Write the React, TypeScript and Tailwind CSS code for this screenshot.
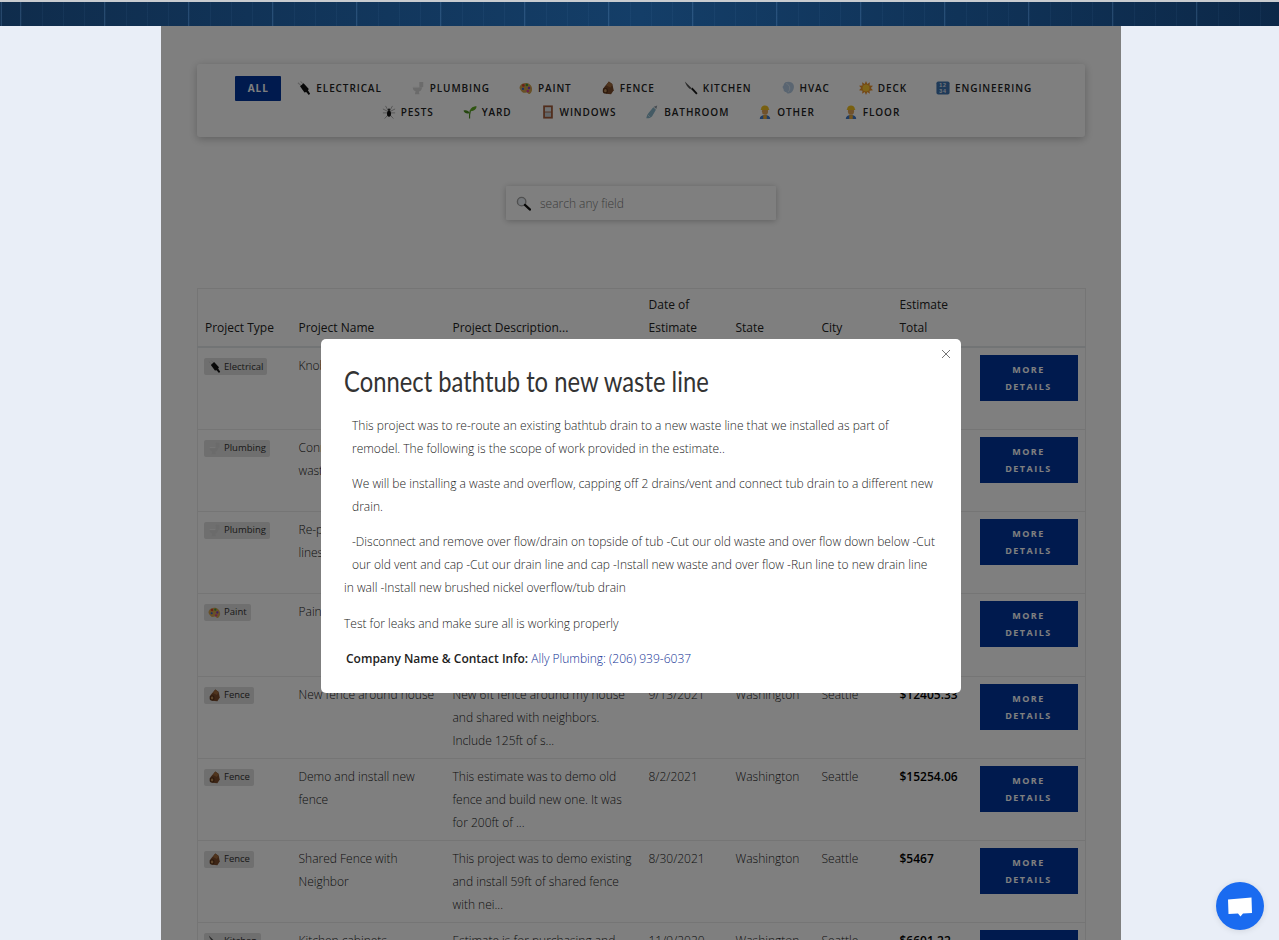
import React from "react";

type IconKind =
  | "plug"
  | "toilet"
  | "palette"
  | "wood"
  | "knife"
  | "hvac"
  | "sun"
  | "numbers"
  | "spider"
  | "seedling"
  | "window"
  | "shower"
  | "worker";

function Emoji({ kind, size = 14 }: { kind: IconKind; size?: number }) {
  return (
    <svg width={size} height={size} viewBox="0 0 16 16" className="shrink-0">
      {kind === "plug" && (
        <g>
          <path d="M1 2l4 3.500M4 0.500l3 3" stroke="#c4c4c4" strokeWidth="1.200" />
          <path d="M3.500 6L7.500 2.500l6 6.500-1 1.500 2.500 4-1.500 1.500-3-3.500-2 .5z" fill="#111" />
        </g>
      )}
      {kind === "toilet" && (
        <g fill="#d6d6d6">
          <rect x="9.500" y="1" width="4.500" height="6" rx="0.600" />
          <path d="M2 7h10.500c0 3-1.500 4.500-3.500 5l.7 3H4.500l.7-3.500C3.200 11 2 9.500 2 7z" />
          <rect x="2" y="6.500" width="7" height="1" fill="#f3f3f3" />
        </g>
      )}
      {kind === "palette" && (
        <g>
          <path d="M1 6c2-4 8-5 11.500-2s3 8.500 0 10.500c-2 1-2.500-1.500-4-1.500S5 14.500 3 12 0 8 1 6z" fill="#d2a24e" />
          <circle cx="5" cy="5" r="1.500" fill="#d8402c" />
          <circle cx="9" cy="4.500" r="1.400" fill="#3c9a3c" />
          <circle cx="11.500" cy="8" r="1.400" fill="#7a3cc8" />
          <circle cx="10" cy="11.500" r="1.400" fill="#d63ca0" />
          <circle cx="4.500" cy="9" r="1.300" fill="#3060d0" />
        </g>
      )}
      {kind === "wood" && (
        <g>
          <path d="M9 0.500l4 3 1.500 7-3 4.500-6-.5L2 9.500l2-3z" fill="#7b4a2a" />
          <path d="M9 0.500l4 3.500-2 3.500L6 5z" fill="#a06a3c" />
          <ellipse cx="5" cy="11" rx="3" ry="3.400" fill="#5a3319" />
          <ellipse cx="5" cy="11" rx="1.500" ry="1.800" fill="#b98a58" />
        </g>
      )}
      {kind === "knife" && (
        <g>
          <path d="M1 0.500l7.500 7.500-1.500 1.500C4.500 7.500 2 4 1 0.500z" fill="#555" />
          <path d="M8 9L9.500 7.500l6 6.500-1.500 1.500z" fill="#161616" />
        </g>
      )}
      {kind === "hvac" && (
        <g>
          <path
            d="M5 1.500c3-1.500 8-1 9.500 3 1 3-.5 7-3 9-2.500 1.500-5 1-5.500-1-1 0-3.500-1-3-3.500C1.500 8 1.500 5.500 3 5c0-1.500 1-2.500 2-3.500z"
            fill="#b4cbe2"
          />
          <path d="M6 3c2 .5 4 2.500 4 5s-1 3.500-2 4.500" stroke="#dfe9f3" strokeWidth="1" fill="none" />
        </g>
      )}
      {kind === "sun" && (
        <g>
          <path
            d="M8 0l1.500 3.500L12.500 1.500l-.5 3.500 4 .5-2.500 2.500 2.500 2.500-4 .5.500 3.500-3-2L8 16l-1.500-3.500-3 2 .5-3.500-4-.5L2.500 8 0 5.500l4-.5-.5-3.500 3 2z"
            fill="#e8912a"
          />
          <circle cx="8" cy="8" r="4" fill="#ffc930" />
        </g>
      )}
      {kind === "numbers" && (
        <g>
          <rect x="0.500" y="0.500" width="15" height="15" rx="2" fill="#3f74b0" />
          <text x="8" y="7" textAnchor="middle" fontSize="6" fontWeight="700" fill="#e8eef6" fontFamily="'Liberation Sans', sans-serif">
            12
          </text>
          <text x="8" y="14" textAnchor="middle" fontSize="6" fontWeight="700" fill="#e8eef6" fontFamily="'Liberation Sans', sans-serif">
            34
          </text>
        </g>
      )}
      {kind === "spider" && (
        <g>
          <path
            d="M8 8L4 1M8 8L1 4.500M8 9H1M8 10l-5 5.500M8 8l4-7M8 8l7-3.500M8 9h7M8 10l5 5.500"
            stroke="#8a8a8a"
            strokeWidth="0.800"
            fill="none"
          />
          <ellipse cx="8" cy="10" rx="2.300" ry="3.500" fill="#111" />
          <circle cx="8" cy="5.500" r="1.400" fill="#333" />
        </g>
      )}
      {kind === "seedling" && (
        <g>
          <path d="M7.500 15.500c-.3-4 .3-7 1-9.500" stroke="#4a8f1f" strokeWidth="1.400" fill="none" />
          <path d="M8 7c0-3 3-5.500 7.500-5.500C15.500 5 12 7.500 8 7z" fill="#5eaa24" />
          <path d="M7.500 9C6.500 6.500 3.500 5.500 0.500 6.500 1.500 9 4.500 10.500 7.500 9z" fill="#4a8f1f" />
        </g>
      )}
      {kind === "window" && (
        <g>
          <rect x="2.500" y="0.500" width="11" height="15" fill="#a25a38" />
          <rect x="4.500" y="2.500" width="7" height="5" fill="#dfe4e8" />
          <rect x="4.500" y="8.500" width="7" height="5" fill="#c4ccd2" />
        </g>
      )}
      {kind === "shower" && (
        <g>
          <path d="M10 2l4-1.500-1 4z" fill="#8e9aa4" />
          <path d="M9.500 2.500l3 3L8 13c-2 2-5 2.500-6.500 2 .5-2 1-4.500 3-6.500z" fill="#88b4c8" />
          <path d="M3 11l3 3" stroke="#c9dde6" strokeWidth="1" />
        </g>
      )}
      {kind === "worker" && (
        <g>
          <path d="M2 16c0-3 2.500-4.500 6-4.500s6 1.500 6 4.500z" fill="#3f78c8" />
          <path d="M6 11.500h4V16H6z" fill="#e8a838" />
          <ellipse cx="8" cy="7" rx="3.500" ry="4.200" fill="#e0a458" />
          <path d="M3.500 5C3.500 2 5.500 0.500 8 0.500S12.500 2 12.500 5l1 .8h-11z" fill="#f0c020" />
        </g>
      )}
    </svg>
  );
}

const filtersTop: { label: string; icon: IconKind }[] = [
  { label: "Electrical", icon: "plug" },
  { label: "Plumbing", icon: "toilet" },
  { label: "Paint", icon: "palette" },
  { label: "Fence", icon: "wood" },
  { label: "Kitchen", icon: "knife" },
  { label: "HVAC", icon: "hvac" },
  { label: "Deck", icon: "sun" },
  { label: "Engineering", icon: "numbers" },
];

const filtersBottom: { label: string; icon: IconKind }[] = [
  { label: "Pests", icon: "spider" },
  { label: "Yard", icon: "seedling" },
  { label: "Windows", icon: "window" },
  { label: "Bathroom", icon: "shower" },
  { label: "Other", icon: "worker" },
  { label: "Floor", icon: "worker" },
];

const projects = [
  { type: "Electrical", icon: "plug", name: "Knob and tube wiring", desc: "Replace old knob and tube wiring through the house.", date: "3/12/2021", total: "$8200" },
  { type: "Plumbing", icon: "toilet", name: "Connect bathtub to new waste line", desc: "This project was to re-route an existing bathtub drain to a new...", date: "6/2/2021", total: "$1850" },
  { type: "Plumbing", icon: "toilet", name: "Re-pipe water supply lines", desc: "Replace galvanized pipes with new copper lines.", date: "5/20/2021", total: "$6400" },
  { type: "Paint", icon: "palette", name: "Paint house", desc: "Prep and paint the exterior of the house.", date: "7/8/2021", total: "$7300" },
  { type: "Fence", icon: "wood", name: "New fence around house", desc: "New 6ft fence around my house and shared with neighbors. Include 125ft of s...", date: "9/13/2021", total: "$12405.33" },
  { type: "Fence", icon: "wood", name: "Demo and install new fence", desc: "This estimate was to demo old fence and build new one. It was for 200ft of ...", date: "8/2/2021", total: "$15254.06" },
  { type: "Fence", icon: "wood", name: "Shared Fence with Neighbor", desc: "This project was to demo existing and install 59ft of shared fence with nei...", date: "8/30/2021", total: "$5467" },
  { type: "Kitchen", icon: "knife", name: "Kitchen cabinets", desc: "Estimate is for purchasing and installing new cabinets.", date: "11/9/2020", total: "$6601.22" },
] as { type: string; icon: IconKind; name: string; desc: string; date: string; total: string }[];

function FilterButton({ label, icon }: { label: string; icon: IconKind }) {
  return (
    <button className="flex h-[24px] items-center gap-[5px] px-[14.5px] text-[10px] font-semibold uppercase tracking-[0.9px] text-[#222]">
      <Emoji kind={icon} size={14} />
      {label}
    </button>
  );
}

export default function App() {
  return (
    <div className="relative h-screen overflow-hidden bg-[#e9eef7] font-['Open_Sans',sans-serif]">
      <header className="h-[26px] border-t-2 border-[#c9ccd0] bg-[repeating-linear-gradient(90deg,rgba(120,170,220,0.22)_0,rgba(120,170,220,0.22)_1px,transparent_1px,transparent_84px),repeating-linear-gradient(90deg,rgba(120,170,220,0.06)_0,rgba(120,170,220,0.06)_1px,transparent_1px,transparent_21px),linear-gradient(90deg,#0f2c4c,#143e68_50%,#0c2848)] bg-[position:20px_0,0_0,0_0]" />

      <main className="relative ml-[161px] h-[914px] w-[960px] overflow-hidden bg-white px-[36px] pt-[38px]">
        <div className="h-[73px] w-[888px] rounded-[3px] pt-[12px] shadow-[0_2px_8px_rgba(0,0,0,0.25)]">
          <div className="flex justify-center">
            <button className="mr-[1.500px] flex h-[25px] w-[46px] items-center justify-center rounded-[1px] bg-[#00349c] text-[10px] font-bold tracking-[1px] text-white">
              ALL
            </button>
            {filtersTop.map((f) => (
              <FilterButton key={f.label} label={f.label} icon={f.icon} />
            ))}
          </div>
          <div className="-mt-px flex justify-center">
            {filtersBottom.map((f) => (
              <FilterButton key={f.label} label={f.label} icon={f.icon} />
            ))}
          </div>
        </div>

        <div className="mx-auto mt-[49px] flex h-[34px] w-[270px] items-center gap-[9px] rounded-[1px] px-[10px] shadow-[0_1px_6px_rgba(0,0,0,0.25)]">
          <svg width="15" height="15" viewBox="0 0 16 16" className="shrink-0">
            <circle cx="6" cy="6" r="4.500" fill="#e8eef4" stroke="#a0a0a0" strokeWidth="1.500" />
            <path d="M9.500 9.500l5.500 5" stroke="#111" strokeWidth="2.400" strokeLinecap="round" />
          </svg>
          <input
            placeholder="search any field"
            className="w-full bg-transparent pt-px text-[12px] font-light outline-none placeholder:text-[#777]"
          />
        </div>

        <table className="mt-[68px] w-[888px] table-fixed border-collapse border border-[#eaeaea] text-[12px] leading-[23px]">
          <colgroup>
            <col className="w-[94px]" />
            <col className="w-[154px]" />
            <col className="w-[196px]" />
            <col className="w-[87px]" />
            <col className="w-[86px]" />
            <col className="w-[78px]" />
            <col className="w-[81px]" />
            <col className="w-[112px]" />
          </colgroup>
          <thead>
            <tr className="border-b-2 border-[#e4e8ea] align-bottom text-left text-[#222]">
              <th className="px-[7px] pb-[7px] pt-[4px] font-normal">Project Type</th>
              <th className="px-[7px] pb-[7px] pt-[4px] font-normal">Project Name</th>
              <th className="px-[7px] pb-[7px] pt-[4px] font-normal">Project Description...</th>
              <th className="px-[7px] pb-[7px] pt-[4px] font-normal">
                Date of
                <br />
                Estimate
              </th>
              <th className="px-[7px] pb-[7px] pt-[4px] font-normal">State</th>
              <th className="px-[7px] pb-[7px] pt-[4px] font-normal">City</th>
              <th className="px-[7px] pb-[7px] pt-[4px] font-normal">
                Estimate
                <br />
                Total
              </th>
              <th />
            </tr>
          </thead>
          <tbody>
            {projects.map((p, i) => (
              <tr
                key={p.name}
                className={`${i === 3 ? "h-[83px]" : "h-[82px]"} border-b border-[#eaeaea] align-top font-light text-[#222]`}
              >
                <td className="pl-[6px] pr-[2px] pt-[9px]">
                  <span className="inline-flex h-[17px] items-center gap-[3px] rounded-[2px] bg-[#dedede] px-[4px] text-[9.500px] font-normal leading-none text-[#333]">
                    <Emoji kind={p.icon} size={13} />
                    {p.type}
                  </span>
                </td>
                <td className="px-[7px] pt-[6px]">{p.name}</td>
                <td className="px-[7px] pt-[6px]">{p.desc}</td>
                <td className="px-[7px] pt-[6px]">{p.date}</td>
                <td className="px-[7px] pt-[6px]">Washington</td>
                <td className="px-[7px] pt-[6px]">Seattle</td>
                <td className="px-[7px] pt-[6px] font-semibold text-black">{p.total}</td>
                <td className="pl-[6px] pt-[7px]">
                  <button className="block h-[46px] w-[98px] bg-[#00349c] px-[6px] text-[9px] font-bold uppercase leading-[17px] tracking-[1.500px] text-white">
                    More
                    <br />
                    Details
                  </button>
                </td>
              </tr>
            ))}
          </tbody>
        </table>

        <div className="absolute inset-0 bg-black/50" />

        <div className="absolute left-[160px] top-[313px] h-[354px] w-[640px] rounded-[5px] bg-white text-[12px] font-light leading-[23px] text-[#222]">
          <button className="absolute right-[10px] top-[10px] text-[#666]">
            <svg width="10" height="10" viewBox="0 0 10 10">
              <path d="M1 1l8 8M9 1l-8 8" stroke="currentColor" strokeWidth="0.900" />
            </svg>
          </button>
          <h2 className="ml-[23px] origin-left scale-x-[0.85] whitespace-nowrap pt-[24px] font-['Lato',sans-serif] text-[28px] font-normal leading-[36px] text-[#333]">
            Connect bathtub to new waste line
          </h2>
          <div className="pl-[23px] pt-[15px]">
            <p className="pl-[8px]">
              This project was to re-route an existing bathtub drain to a new waste line that we installed as part of
              <br />
              remodel. The following is the scope of work provided in the estimate..
            </p>
            <p className="mt-[12px] pl-[8px]">
              We will be installing a waste and overflow, capping off 2 drains/vent and connect tub drain to a different new
              <br />
              drain.
            </p>
            <p className="mt-[12px] whitespace-nowrap">
              <span className="block pl-[8px]">-Disconnect and remove over flow/drain on topside of tub -Cut our old waste and over flow down below -Cut</span>
              <span className="block pl-[8px]">our old vent and cap -Cut our drain line and cap -Install new waste and over flow -Run line to new drain line</span>
              <span className="block">in wall -Install new brushed nickel overflow/tub drain</span>
            </p>
            <p className="mt-[13px]">Test for leaks and make sure all is working properly</p>
            <p className="mt-[12px] pl-[2px]">
              <strong className="font-semibold text-[#222]">Company Name &amp; Contact Info: </strong>
              <a className="text-[#0f2f94]">Ally Plumbing: (206) 939-6037</a>
            </p>
          </div>
        </div>
      </main>

      <button className="absolute left-[1216px] top-[882px] flex h-[48px] w-[48px] items-center justify-center rounded-full bg-[#1a6bf0] shadow-[0_1px_6px_rgba(0,0,0,0.1)]">
        <svg width="26" height="24" viewBox="0 0 26 24">
          <path d="M1 5.500L24.500 3.500l.5 15.500-9 .5-2.500 3-2.500-3-9.500.5z" fill="#fff" />
        </svg>
      </button>
    </div>
  );
}
